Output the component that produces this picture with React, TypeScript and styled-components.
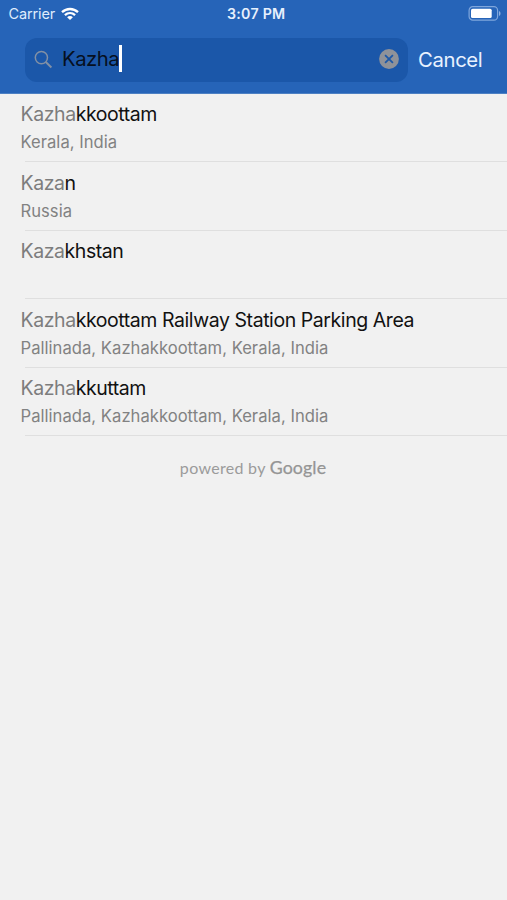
import React from "react";
import styled, { createGlobalStyle } from "styled-components";

const GlobalStyle = createGlobalStyle`
  * { box-sizing: border-box; }
  body { margin: 0; background: #f1f1f1; }
`;

const Screen = styled.main`
  width: 507px;
  height: 900px;
  overflow: hidden;
  background: #f1f1f1;
  font-family: Inter, "Liberation Sans", sans-serif;
`;

const Header = styled.header`
  height: 94px;
  background: #2664b8;
  border-bottom: 1px solid #4d80c3;
  color: #fff;
`;

const StatusBar = styled.div`
  height: 27px;
  display: grid;
  grid-template-columns: 1fr auto 1fr;
  align-items: center;
  padding: 0 6px 0 8.4px;
  font-size: 14.5px;
  line-height: 27px;
`;

const Carrier = styled.div`
  display: flex;
  align-items: center;
  gap: 6px;
  color: #dfecfc;
  letter-spacing: -0.1px;
`;

const Clock = styled.time`
  padding-left: 3px;
  font-weight: 600;
  font-size: 14.2px;
  letter-spacing: 0.25px;
  color: #e6f0fd;
`;

const BatterySlot = styled.div`
  display: flex;
  justify-content: flex-end;
`;

const SearchRow = styled.div`
  display: flex;
  align-items: center;
  padding: 11px 0 0 25px;
`;

const SearchField = styled.div`
  width: 383px;
  height: 44px;
  display: flex;
  align-items: center;
  padding: 0 9px 2px 9px;
  border-radius: 12px;
  background: #1b57a9;
`;

const Query = styled.span`
  margin-left: 9px;
  color: #06101f;
  font-size: 20.3px;
  letter-spacing: -0.5px;
  line-height: 26px;
`;

const Caret = styled.span`
  width: 2.5px;
  height: 27px;
  margin: 0 auto 1px 0;
  background: #fff;
`;

const Cancel = styled.button`
  margin: 0 0 0 10px;
  padding: 0;
  border: 0;
  background: none;
  color: #e9f2ff;
  font: 400 20.3px/26px Inter, sans-serif;
  letter-spacing: -0.35px;
`;

const Results = styled.ul`
  list-style: none;
  margin: 0;
  padding: 0;
`;

const Result = styled.li`
  height: 68.4px;
  padding: 6.4px 0 0 20.5px;
  background: linear-gradient(#dfdfdf, #dfdfdf) 25px 100% / 100% 1px no-repeat;
`;

const Title = styled.div`
  font-size: 19.5px;
  line-height: 28px;
  letter-spacing: -0.43px;
  color: #111;
  white-space: nowrap;
`;

const Typed = styled.span`
  color: #7d7d7d;
`;

const Place = styled.div`
  font-size: 16.6px;
  line-height: 28.4px;
  letter-spacing: 0.03px;
  color: #828282;
  white-space: nowrap;
`;

const Attribution = styled.footer`
  display: flex;
  justify-content: center;
  align-items: baseline;
  gap: 4px;
  margin-top: 19px;
  padding-right: 1px;
  font-family: Lato, sans-serif;
  font-size: 16px;
  line-height: 24px;
  letter-spacing: 0.3px;
  color: #9b9b9b;
`;

const Brand = styled.span`
  font-size: 17.8px;
  font-weight: 400;
  letter-spacing: 0.1px;
  color: #959595;
  -webkit-text-stroke: 0.25px #959595;
`;

const WifiIcon = () => (
  <svg width="18" height="14" viewBox="0 0 18 14" fill="none" stroke="#fff" strokeWidth="2.3">
    <path d="M1 5.2C5.6.9 12.4.9 17 5.2M3.9 8.2c3-2.7 7.2-2.7 10.2 0" />
    <path d="M9 13 6.1 10.2c1.6-1.5 4.2-1.5 5.8 0z" fill="#fff" stroke="none" />
  </svg>
);

const BatteryIcon = () => (
  <svg width="33" height="15" viewBox="0 0 33 15">
    <rect x="1.1" y="0.7" width="28.5" height="13.4" rx="3.7" fill="none" stroke="#7fa6dc" strokeWidth="1.2" />
    <rect x="3" y="2.7" width="20.7" height="9.4" rx="1.6" fill="#fff" />
    <path d="M31 5v5c2-.8 2-4.2 0-5z" fill="#8eb0e0" />
  </svg>
);

const SearchIcon = () => (
  <svg width="19" height="19" viewBox="0 0 19 19" fill="none" stroke="#8290a5" strokeWidth="1.5">
    <circle cx="7.4" cy="7.6" r="6.1" />
    <path d="m11.8 12 5.6 5.5" strokeWidth="1.9" />
  </svg>
);

const ClearIcon = () => (
  <svg width="20" height="20" viewBox="0 0 20 20">
    <circle cx="10" cy="10" r="9.9" fill="#8f9299" />
    <path d="m6.1 6.1 7.8 7.8m0-7.8-7.8 7.8" stroke="#1d58a8" strokeWidth="1.8" />
  </svg>
);

const places = [
  { typed: "Kazha", rest: "kkoottam", place: "Kerala, India" },
  { typed: "Kaza", rest: "n", place: "Russia" },
  { typed: "Kaza", rest: "khstan", place: "" },
  { typed: "Kazha", rest: "kkoottam Railway Station Parking Area", place: "Pallinada, Kazhakkoottam, Kerala, India" },
  { typed: "Kazha", rest: "kkuttam", place: "Pallinada, Kazhakkoottam, Kerala, India" },
];

export default function App() {
  return (
    <Screen>
      <GlobalStyle />
      <Header>
        <StatusBar>
          <Carrier>Carrier <WifiIcon /></Carrier>
          <Clock>3:07 PM</Clock>
          <BatterySlot><BatteryIcon /></BatterySlot>
        </StatusBar>
        <SearchRow>
          <SearchField>
            <SearchIcon />
            <Query>Kazha</Query>
            <Caret />
            <ClearIcon />
          </SearchField>
          <Cancel>Cancel</Cancel>
        </SearchRow>
      </Header>
      <Results>
        {places.map((p) => (
          <Result key={p.typed + p.rest}>
            <Title><Typed>{p.typed}</Typed>{p.rest}</Title>
            <Place>{p.place}</Place>
          </Result>
        ))}
      </Results>
      <Attribution>powered by <Brand>Google</Brand></Attribution>
    </Screen>
  );
}
